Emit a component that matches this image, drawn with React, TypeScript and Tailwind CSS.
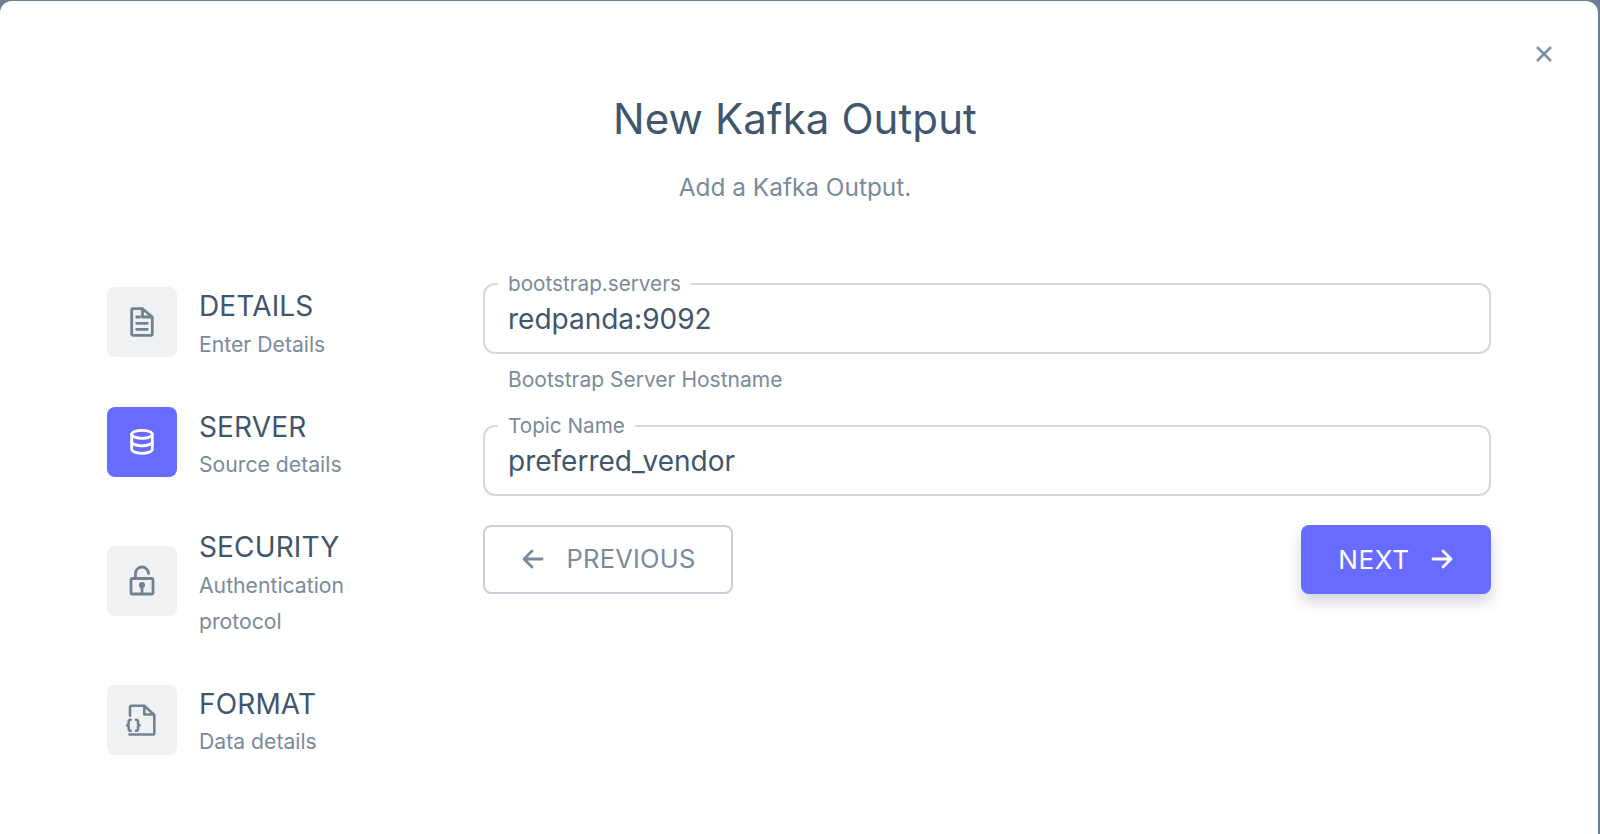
import React from "react";

const Stroke = ({ children, color = "#728292", sw = 2.6 }: { children: React.ReactNode; color?: string; sw?: number }) => (
  <svg width={32} height={32} viewBox="0 0 32 32" fill="none" stroke={color} strokeWidth={sw} strokeLinecap="round" strokeLinejoin="round">
    {children}
  </svg>
);

const DocIcon = () => (
  <Stroke sw={2.8}>
    <path d="M5.700 3.700a1 1 0 0 1 1-1h9.500L26.300 11v17.300a1 1 0 0 1-1 1H6.700a1 1 0 0 1-1-1z" />
    <path d="M16.500 3v8h9" />
    <path d="M10.700 11h3M10.700 17.300h10.600M10.700 23.300h10.600" />
  </Stroke>
);
const DbIcon = () => (
  <Stroke color="#ffffff" sw={2.8}>
    <ellipse cx="16" cy="8.300" rx="10.300" ry="4" />
    <path d="M5.700 8.300v15c0 2.200 4.600 4 10.300 4s10.300-1.800 10.300-4v-15" />
    <path d="M5.700 15.800c0 2.200 4.600 4 10.300 4s10.300-1.800 10.300-4" />
  </Stroke>
);
const LockIcon = () => (
  <Stroke sw={2.8}>
    <rect x="5" y="13.500" width="22" height="15.500" rx="1.500" />
    <path d="M9.500 13.500V8.500a6.500 6.500 0 0 1 13 0" />
    <circle cx="16" cy="20" r="1.700" fill="#728292" />
    <path d="M16 20.500V28" />
  </Stroke>
);
const CodeFileIcon = () => (
  <Stroke sw={2.600}>
    <path d="M4 11.700V3a1.300 1.300 0 0 1 1.300-1.300h13L28.300 11v18.200a1.300 1.300 0 0 1-1.300 1.300H3.500" />
    <path d="M18.300 2v8.500h9.500" />
    <path d="M4.700 15.700c-1.600 0-2 .7-2 1.800v2c0 1-.6 1.700-1.700 1.700 1.100 0 1.700.7 1.700 1.700v2c0 1.100.4 1.800 2 1.800" />
    <path d="M10 15.700c1.600 0 2 .7 2 1.800v2c0 1 .6 1.700 1.700 1.700-1.100 0-1.700.7-1.700 1.700v2c0 1.100-.4 1.800-2 1.800" />
  </Stroke>
);

const Step = ({ icon, title, sub, active }: { icon: React.ReactNode; title: string; sub: string; active?: boolean }) => (
  <div className="flex items-center gap-[22px]">
    <div className={`flex h-[70px] w-[70px] shrink-0 items-center justify-center rounded-lg ${active ? "bg-[#676bff]" : "bg-[#f0f1f3]"}`}>{icon}</div>
    <div className="w-[170px] pt-[6px]">
      <div className="text-[28px] leading-[37.600px] tracking-[0.15px] text-[#40566d]">{title}</div>
      <div className="text-[21.200px] leading-[36px] text-[#7b8a9a]">{sub}</div>
    </div>
  </div>
);

const Field = ({ label, value }: { label: string; value: string }) => (
  <fieldset className="block h-[79px] rounded-xl border-2 border-[#d3d8de] pl-[13px] pr-6">
    <legend className="-mt-[2px] px-[10px] text-[20.700px] leading-[17px] text-[#7b8a9a]">{label}</legend>
    <div className="ml-[10px] mt-[9px] text-[28px] leading-[36px] text-[#40566d]">{value}</div>
  </fieldset>
);

export default function App() {
  return (
    <div className="h-[834px] overflow-hidden bg-[#6c7f92] pr-[2px] pt-[1px] [font-family:Inter,'Liberation_Sans',sans-serif]">
      <div className="relative h-[833px] rounded-t-xl bg-white px-[107px] pt-[94px]">
        <button className="absolute right-[45px] top-[44px] text-[#7f8e9e]" aria-label="close">
          <svg width="18" height="18" viewBox="0 0 18 18" fill="none" stroke="currentColor" strokeWidth="2.600">
            <path d="M2 2l14 14M16 2L2 16" />
          </svg>
        </button>
        <h1 className="ml-[-8px] text-center text-[42px] font-normal leading-[48px] tracking-[0.1px] text-[#40566d]">New Kafka Output</h1>
        <p className="ml-[-8px] mt-[26px] text-center text-[24.400px] leading-[36px] text-[#7b8a9a]">Add a Kafka Output.</p>
        <div className="mt-[70px] flex">
          <div className="flex w-[376px] shrink-0 flex-col gap-[41px] pt-[7px]">
            <Step icon={<DocIcon />} title="DETAILS" sub="Enter Details" />
            <Step active icon={<DbIcon />} title="SERVER" sub="Source details" />
            <Step icon={<LockIcon />} title="SECURITY" sub="Authentication protocol" />
            <Step icon={<CodeFileIcon />} title="FORMAT" sub="Data details" />
          </div>
          <div className="w-[1008px]">
            <Field label="bootstrap.servers" value="redpanda:9092" />
            <div className="h-[63px] pl-[25px] pt-[8px] text-[21px] leading-[36px] text-[#7b8a9a]">Bootstrap Server Hostname</div>
            <Field label="Topic Name" value="preferred_vendor" />
            <div className="mt-[28.500px] flex justify-between">
              <button className="flex h-[69px] w-[250px] items-center justify-center gap-[22px] rounded-lg border-2 border-[#c9d0d9] text-[25.500px] font-normal tracking-[0.2px] text-[#7b8a9a]">
                <svg width="24" height="24" viewBox="0 0 24 24" fill="none" stroke="currentColor" strokeWidth="2.800" strokeLinecap="round" strokeLinejoin="round"><path d="M21 12H4M11 4l-8 8 8 8" /></svg>
                PREVIOUS
              </button>
              <button className="flex h-[69px] w-[190px] items-center justify-center gap-[20px] rounded-lg bg-[#676bff] text-[26px] font-normal tracking-[0.7px] text-white shadow-[0_8px_14px_rgba(60,70,100,0.22)]">
                NEXT
                <svg width="24" height="24" viewBox="0 0 24 24" fill="none" stroke="currentColor" strokeWidth="2.800" strokeLinecap="round" strokeLinejoin="round"><path d="M3 12h17M13 4l8 8-8 8" /></svg>
              </button>
            </div>
          </div>
        </div>
      </div>
    </div>
  );
}
